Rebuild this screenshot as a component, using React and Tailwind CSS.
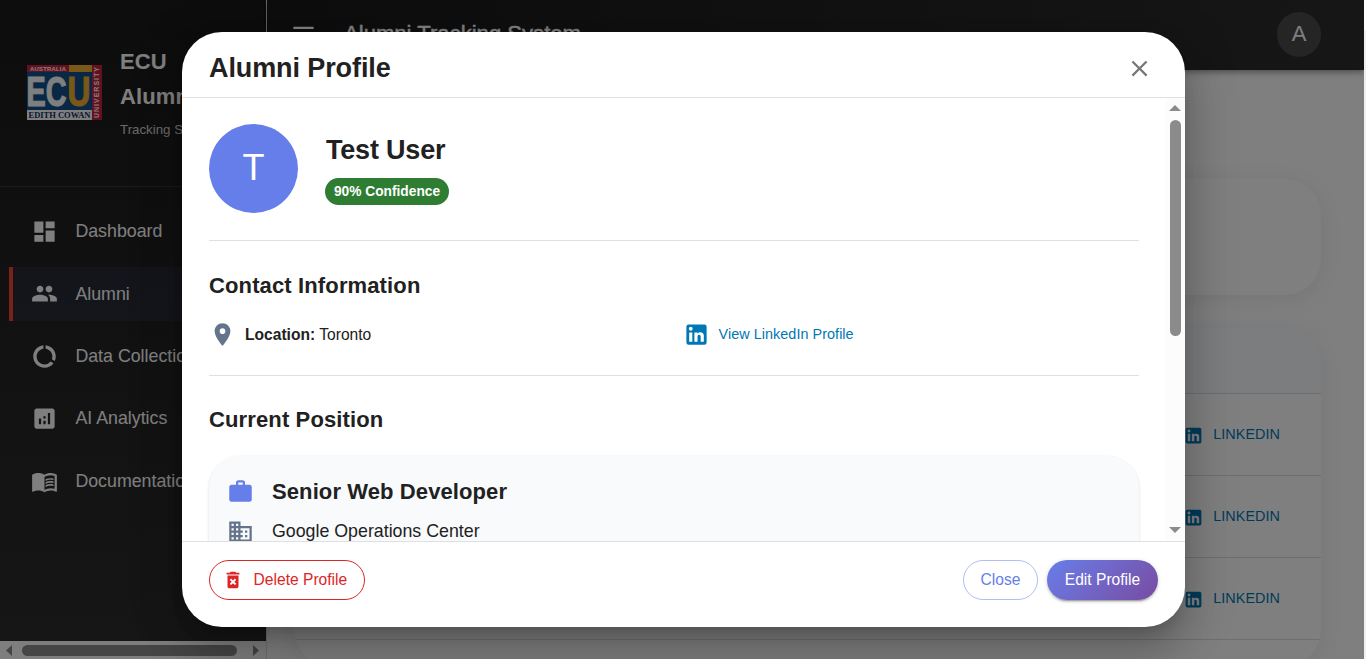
import { MdDashboard, MdPeople, MdDataUsage, MdAnalytics, MdLocationOn, MdWork, MdBusiness, MdDeleteForever, MdClose, MdMenu } from "react-icons/md";

function LinkedIn({ className }) {
  return (
    <svg viewBox="0 0 24 24" fill="currentColor" className={className}>
      <path d="M19 3a2 2 0 0 1 2 2v14a2 2 0 0 1-2 2H5a2 2 0 0 1-2-2V5a2 2 0 0 1 2-2h14m-.5 15.5v-5.3a3.26 3.26 0 0 0-3.26-3.26c-.85 0-1.84.52-2.32 1.3v-1.11h-2.79v8.37h2.79v-4.93c0-.77.62-1.4 1.39-1.4a1.4 1.4 0 0 1 1.4 1.4v4.93h2.79M6.88 8.56a1.68 1.68 0 0 0 1.68-1.68c0-.93-.75-1.69-1.68-1.69a1.69 1.69 0 0 0-1.69 1.69c0 .93.76 1.68 1.69 1.68m1.39 9.94v-8.37H5.5v8.37h2.77z" />
    </svg>
  );
}

function MenuBook({ className }) {
  return (
    <svg viewBox="0 0 24 24" fill="currentColor" className={className}>
      <path d="M21 5c-1.11-.35-2.33-.5-3.5-.5-1.95 0-4.05.4-5.5 1.5-1.45-1.1-3.55-1.5-5.5-1.5S2.45 4.9 1 6v14.65c0 .25.25.5.5.5.1 0 .15-.05.25-.05C3.1 20.45 5.05 20 6.5 20c1.95 0 4.05.4 5.5 1.5 1.35-.85 3.8-1.5 5.5-1.5 1.65 0 3.35.3 4.75 1.05.1.05.15.05.25.05.25 0 .5-.25.5-.5V6c-.6-.45-1.25-.75-2-1zm0 13.5c-1.1-.35-2.3-.5-3.5-.5-1.7 0-4.15.65-5.5 1.5V8c1.35-.85 3.8-1.5 5.5-1.5 1.2 0 2.4.15 3.5.5v11.5z" />
      <path d="M17.5 10.5c.88 0 1.73.09 2.5.26V9.24c-.79-.15-1.64-.24-2.5-.24-1.7 0-3.24.29-4.5.83v1.66c1.13-.64 2.7-.99 4.5-.99zM13 12.49v1.66c1.13-.64 2.7-.99 4.5-.99.88 0 1.73.09 2.5.26V11.9c-.79-.15-1.64-.24-2.5-.24-1.7 0-3.24.3-4.5.83zm4.5 1.84c-1.7 0-3.24.29-4.5.83v1.66c1.13-.64 2.7-.99 4.5-.99.88 0 1.73.09 2.5.26v-1.52c-.79-.16-1.64-.24-2.5-.24z" />
    </svg>
  );
}

function Logo() {
  return (
    <div className="mb-[2px] flex h-[55px] w-[75px] shrink-0 bg-[#c8233f] font-['Liberation_Sans',sans-serif]">
      <div className="flex w-[65px] flex-col">
        <div className="flex h-[7px]">
          <svg width="42" height="7"><text x="3" y="5.7" fontSize="6" fontWeight="700" fill="#fff" textLength="36" lengthAdjust="spacing">AUSTRALIA</text></svg>
          <div className="flex-1 bg-[#f2b030]" />
        </div>
        <svg width="65" height="38" className="bg-[#11508c]">
          <text x="-0.5" y="34" fontSize="42" fontWeight="700" fill="#fff" stroke="#fff" strokeWidth="1.2" textLength="40" lengthAdjust="spacingAndGlyphs">EC</text>
          <text x="40.5" y="34" fontSize="42" fontWeight="700" fill="#f2b030" stroke="#f2b030" strokeWidth="1.2" textLength="23" lengthAdjust="spacingAndGlyphs">U</text>
        </svg>
        <svg width="65" height="10" className="bg-white">
          <text x="1.5" y="7.8" fontSize="8.5" fontWeight="700" fontFamily="Liberation Serif, serif" fill="#11305c" textLength="62" lengthAdjust="spacingAndGlyphs">EDITH COWAN</text>
        </svg>
      </div>
      <svg width="10" height="55">
        <text transform="translate(7.4 53) rotate(-90)" fontSize="7" fontWeight="700" fill="#fff" textLength="51" lengthAdjust="spacing">UNIVERSITY</text>
      </svg>
    </div>
  );
}

const nav = [
  { Icon: MdDashboard, label: "Dashboard" },
  { Icon: MdPeople, label: "Alumni", active: true },
  { Icon: MdDataUsage, label: "Data Collection" },
  { Icon: MdAnalytics, label: "AI Analytics" },
  { Icon: MenuBook, label: "Documentation" },
];

function Sidebar() {
  return (
    <aside className="flex w-[267px] shrink-0 flex-col overflow-hidden border-r border-[#e0e0e0] bg-linear-to-b from-[#1a1a1a] to-[#2d2d2d] text-white">
      <div className="flex h-[187px] shrink-0 items-center gap-[18px] border-b border-white/10 pl-[27px]">
        <Logo />
        <div className="mb-[2px] w-[200px]">
          <div className="text-[22px] leading-[35px] font-bold tracking-[0.1px]">ECU<br />Alumni</div>
          <div className="mt-[5px] text-[13.3px] leading-[22px] whitespace-nowrap opacity-80">Tracking System</div>
        </div>
      </div>
      <nav className="flex flex-1 flex-col gap-[8.4px] pt-[17.6px] pl-[9px]">
        {nav.map(({ Icon, label, active }) => (
          <div
            key={label}
            className={
              active
                ? "flex h-[54px] items-center border-l-4 border-[#f44336] bg-[#667eea]/10 pl-[18px]"
                : "flex h-[54px] items-center pl-[22px]"
            }
          >
            <Icon className="mr-[17.4px] size-[27px] shrink-0" />
            <span className="text-[17.8px] whitespace-nowrap">{label}</span>
          </div>
        ))}
      </nav>
      <div className="flex h-[18px] shrink-0 items-center bg-[#fcfcfc]">
        <svg width="22" height="18"><path d="M12 4v11L6 9.5z" fill="#8b8b8b" /></svg>
        <div className="h-[11px] w-[215px] rounded-full bg-[#8b8b8b]" />
        <svg width="29" height="18"><path d="M16 4v11l6-5.5z" fill="#8b8b8b" /></svg>
      </div>
    </aside>
  );
}

function Page() {
  return (
    <div className="isolate flex h-full w-[1364px] overflow-hidden bg-white">
      <Sidebar />
      <div className="flex flex-1 flex-col">
        <header className="z-10 flex h-[70px] shrink-0 items-center justify-between bg-linear-to-r from-[#1a1a1a] to-[#2d2d2d] pr-[43px] pl-[23px] text-white shadow-[0_2px_4px_-1px_rgba(0,0,0,.2),0_4px_5px_rgba(0,0,0,.14),0_1px_10px_rgba(0,0,0,.12)]">
          <div className="flex items-center">
            <MdMenu className="mr-[27px] mb-[2px] size-[27px]" />
            <span className="mb-[2px] text-[22.1px] [-webkit-text-stroke:0.4px_white]">Alumni Tracking System</span>
          </div>
          <div className="mb-[1px] flex h-[45px] w-[44px] items-center justify-center rounded-full bg-[#4a4a4a] pb-[2px] text-[22px]">A</div>
        </header>
        <main className="flex flex-1 flex-col bg-[#fefefe] pr-[43px] pl-[27px]">
          <div className="mt-[109px] h-[116px] shrink-0 rounded-[36px] bg-white shadow-[0_4px_22px_rgba(0,0,0,.08)]" />
          <div className="mt-[33px] h-[338px] shrink-0 overflow-hidden rounded-[36px] bg-white shadow-[0_4px_22px_rgba(0,0,0,.08)]">
            <div className="h-[66px] border-b border-[#dcdcdc] bg-[#f8fafc]" />
            {[0, 1, 2].map((row) => (
              <div key={row} className="flex h-[82px] items-center justify-end border-b border-[#dcdcdc] pr-[41px] text-[#0077b5]">
                <LinkedIn className="mt-[1px] mr-[9px] size-[21px]" />
                <span className="text-[14.4px] tracking-[0.05px]">LINKEDIN</span>
              </div>
            ))}
          </div>
        </main>
      </div>
    </div>
  );
}

function Dialog() {
  return (
    <section className="flex h-[595px] w-[1003px] flex-col overflow-hidden rounded-[40px] bg-white text-[#212121] shadow-[0_12px_17px_-8px_rgba(0,0,0,.2),0_27px_42px_3px_rgba(0,0,0,.14),0_10px_51px_9px_rgba(0,0,0,.12)]">
      <header className="flex h-[65px] shrink-0 items-center justify-between pr-[32px] pl-[27px]">
        <h2 className="mt-[6px] text-[27px] leading-[36px] font-bold tracking-[-0.1px]">Alumni Profile</h2>
        <MdClose className="mt-[8px] size-[27px] text-[#757575]" />
      </header>
      <div className="flex h-[445px] shrink-0 border-y border-[#e0e0e0]">
        <div className="w-[984px] overflow-hidden pr-[27px] pl-[27px]">
          <div className="mt-[26px] flex h-[117px] items-start border-b border-[#e0e0e0]">
            <div className="flex size-[89px] items-center justify-center rounded-full bg-[#667eea] pb-[1px] text-[36px] text-white">T</div>
            <div className="ml-[27px] pt-[8px]">
              <h3 className="pl-px text-[27px] leading-[36px] font-bold tracking-[-0.2px]">Test User</h3>
              <div className="mt-[10px] flex h-[27px] w-[124px] items-center justify-center rounded-full bg-[#2e7d32] pt-[1px] text-[13.75px] font-bold text-white">90% Confidence</div>
            </div>
          </div>
          <div className="h-[135px] border-b border-[#e0e0e0] pt-[27px]">
            <h4 className="text-[22px] leading-[35px] font-bold tracking-[0.13px]">Contact Information</h4>
            <div className="mt-[18px] flex h-[27px] items-center">
              <MdLocationOn className="mr-[9px] size-[27px] text-[#64748b]" />
              <p className="w-[438px] text-[15.6px]"><b>Location:</b> Toronto</p>
              <LinkedIn className="mr-[8.5px] size-[27px] text-[#0077b5]" />
              <a className="text-[14.4px] tracking-[0.05px] text-[#0077b5]">View LinkedIn Profile</a>
            </div>
          </div>
          <div className="pt-[26px]">
            <h4 className="text-[22px] leading-[35px] font-bold tracking-[0.13px]">Current Position</h4>
            <div className="mt-[19px] h-[140px] rounded-[32px] bg-[#f8fafc] pt-[18px] pl-[18px] shadow-[0_1px_3px_rgba(0,0,0,.15)]">
              <div className="flex h-[35px] items-center gap-[18px]">
                <MdWork className="size-[27px] text-[#667eea]" />
                <span className="text-[22px] font-bold tracking-[0.1px]">Senior Web Developer</span>
              </div>
              <div className="mt-[8px] flex h-[28px] items-center gap-[18px]">
                <MdBusiness className="size-[27px] text-[#64748b]" />
                <span className="text-[17.8px]">Google Operations Center</span>
              </div>
            </div>
          </div>
        </div>
        <div className="flex w-[19px] flex-col items-center justify-between bg-[#fcfcfc] py-[7px] pr-[1px]">
          <svg width="12" height="6"><path d="M0 6h12L6 0z" fill="#8b8b8b" /></svg>
          <div className="mt-[9px] mb-auto h-[216px] w-[11px] rounded-full bg-[#8b8b8b]" />
          <svg width="12" height="6" className="mb-[1px]"><path d="M0 0h12L6 6z" fill="#8b8b8b" /></svg>
        </div>
      </div>
      <footer className="flex flex-1 items-start pt-[18px] pr-[27px] pl-[27px] text-[15.6px]">
        <button className="flex h-[40px] w-[156px] items-center rounded-full border border-[#dc2626] pl-[12px] text-[#dc2626]">
          <MdDeleteForever className="mr-[9.6px] size-[22px]" />Delete Profile
        </button>
        <button className="ml-auto h-[40px] w-[75px] rounded-full border border-[#667eea]/50 text-[#667eea]">Close</button>
        <button className="ml-[9px] h-[40px] w-[111px] rounded-full bg-linear-135 from-[#667eea] to-[#764ba2] text-white shadow-[0_3px_1px_-2px_rgba(0,0,0,.2),0_2px_2px_rgba(0,0,0,.14),0_1px_5px_rgba(0,0,0,.12)]">Edit Profile</button>
      </footer>
    </section>
  );
}

export default function App() {
  return (
    <div className="relative flex h-[659px] w-[1366px] overflow-hidden bg-[#f0f0f0] font-['Liberation_Sans',Arial,sans-serif]">
      <Page />
      <div className="h-[30px] w-[2px] bg-white" />
      <div className="absolute inset-y-0 left-0 flex w-[1364px] items-start overflow-hidden bg-black/50 pt-[32px] pl-[182px]">
        <Dialog />
      </div>
    </div>
  );
}
